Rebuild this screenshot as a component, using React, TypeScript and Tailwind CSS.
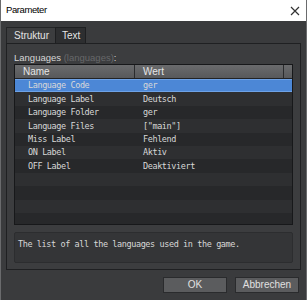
import React from "react";

const rows = [
  { name: "Language Code", value: "ger" },
  { name: "Language Label", value: "Deutsch" },
  { name: "Language Folder", value: "ger" },
  { name: "Language Files", value: '["main"]' },
  { name: "Miss Label", value: "Fehlend" },
  { name: "ON Label", value: "Aktiv" },
  { name: "OFF Label", value: "Deaktiviert" },
];

const sans = "font-['Liberation_Sans','Noto_Sans',sans-serif]";
const mono = "font-['DejaVu_Sans_Mono','Liberation_Mono',monospace] text-[8.5px] tracking-[-0.4px] text-[#d8d8d8] whitespace-pre leading-none";

const App = () => {
  const filler = Array.from({ length: 5 });
  return (
    <div className="w-[307px] h-[300px] flex flex-col bg-[#3a3b3d] border-x border-[#6a6b6d] overflow-hidden">
      {/* title bar */}
      <div className="h-[21px] bg-white flex items-center justify-between pl-[5px] pr-[6px] shrink-0">
        <span className={`${sans} text-[9.5px] tracking-[-0.4px] text-black`}>Parameter</span>
        <svg width="10" height="10" viewBox="0 0 10 10">
          <path d="M1 1 L9 9 M9 1 L1 9" stroke="#333" strokeWidth="1.2" />
        </svg>
      </div>

      <div className="flex flex-col px-[5px] pt-[6px]">
        {/* tabs */}
        <div className="flex h-[16px]">
          <div className={`${sans} text-[10px] text-[#e4e4e4] bg-[#3c3d3f] border-t border-l border-[#232426] pl-[7px] w-[49px] leading-[15px]`}>Struktur</div>
          <div className={`${sans} text-[10px] text-[#e4e4e4] bg-[#2d2e30] border border-b-0 border-[#1e1f21] pl-[6px] w-[31px] leading-[15px]`}>Text</div>
        </div>

        {/* panel */}
        <div className="h-[227px] border border-[#1f2022] bg-[#3c3d3f] px-[7px] flex flex-col">
          <div className={`${sans} text-[9.5px] h-[20px] pt-[8px] leading-[12px] text-[#d6d6d6]`}>
            Languages <span className="text-[#67686a]">(languages)</span>:
          </div>

          <div className="h-[161px] shrink-0 border border-[#17181a] bg-[#262729] flex flex-col overflow-hidden">
            <div className="h-[14px] flex bg-gradient-to-b from-[#6a6b6d] to-[#58595b] shrink-0 border-b border-[#222325]">
              <div className={`${sans} text-[10px] leading-[13px] text-[#e6e6e6] w-[120px] pl-[8px] border-r border-[#2a2b2d]`}>Name</div>
              <div className={`${sans} text-[10px] leading-[13px] text-[#e6e6e6] w-[149px] pl-[8px] border-r border-[#2a2b2d]`}>Wert</div>
              <div className="flex-1" />
            </div>
            {rows.map((row, i) => (
              <div
                key={i}
                className={`h-[13.4px] flex items-center shrink-0 ${i === 0 ? "bg-[#4c87d6] border-y border-[#6ea2e6]" : i % 2 ? "bg-[#2e2f31]" : "bg-[#27282a]"}`}
              >
                <div className={`${mono} w-[120px] pl-[13px]`}>{row.name}</div>
                <div className={`${mono} pl-[8px]`}>{row.value}</div>
              </div>
            ))}
            {filler.map((_, i) => (
              <div key={"f" + i} className={`h-[13.4px] shrink-0 ${(i + 7) % 2 ? "bg-[#2e2f31]" : "bg-[#27282a]"}`} />
            ))}
          </div>

          <div className={`${mono} h-[31px] shrink-0 mt-[7px] border border-[#2c2d2f] bg-[#343537] rounded-[2px] pl-[3px] pt-[7px]`}>
            The list of all the languages used in the game.
          </div>
        </div>

        {/* buttons */}
        <div className="flex justify-end gap-[8px] mt-[7px] pr-[2px]">
          <button className={`${sans} w-[64px] h-[16px] bg-[#5b5c5e] border border-[#2a2b2d] text-[10px] text-[#e0e0e0] leading-[14px]`}>OK</button>
          <button className={`${sans} w-[64px] h-[16px] bg-[#5b5c5e] border border-[#2a2b2d] text-[10px] text-[#e0e0e0] leading-[14px]`}>Abbrechen</button>
        </div>
      </div>
    </div>
  );
};

export default App;
